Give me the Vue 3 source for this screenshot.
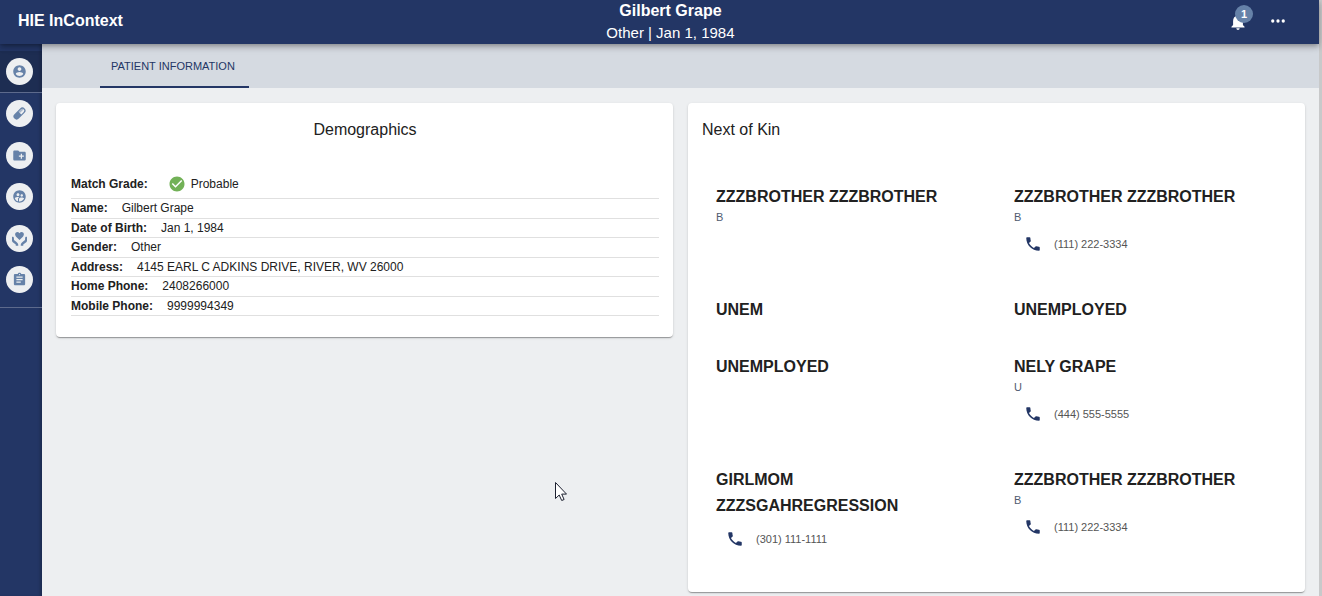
<script setup>
const navItems = [
  { label: 'Medications', icon: 'pill' },
  { label: 'Documents', icon: 'folder' },
  { label: 'Care team', icon: 'group' },
  { label: 'Care plans', icon: 'care' },
  { label: 'Assessments', icon: 'clipboard' },
]

const demographics = [
  { label: 'Match Grade:', value: 'Probable', match: true },
  { label: 'Name:', value: 'Gilbert Grape' },
  { label: 'Date of Birth:', value: 'Jan 1, 1984' },
  { label: 'Gender:', value: 'Other' },
  { label: 'Address:', value: '4145 EARL C ADKINS DRIVE, RIVER, WV 26000' },
  { label: 'Home Phone:', value: '2408266000' },
  { label: 'Mobile Phone:', value: '9999994349' },
]

const kin = [
  { name: 'ZZZBROTHER ZZZBROTHER', code: 'B' },
  { name: 'ZZZBROTHER ZZZBROTHER', code: 'B', phone: '(111) 222-3334' },
  { name: 'UNEM' },
  { name: 'UNEMPLOYED' },
  { name: 'UNEMPLOYED' },
  { name: 'NELY GRAPE', code: 'U', phone: '(444) 555-5555' },
  { name: 'GIRLMOM ZZZSGAHREGRESSION', phone: '(301) 111-1111' },
  { name: 'ZZZBROTHER ZZZBROTHER', code: 'B', phone: '(111) 222-3334' },
]
</script>

<template>
  <div class="app">
    <header class="topbar">
      <div class="brand">HIE InContext</div>
      <div class="patient">
        <h1>Gilbert Grape</h1>
        <p>Other | Jan 1, 1984</p>
      </div>
      <div class="actions">
        <button class="action" type="button" aria-label="Notifications">
          <svg width="20" height="18" viewBox="0 0 24 22"><path d="M12 22c1.100 0 2-.9 2-2h-4c0 1.100.9 2 2 2zm6-6v-5c0-3.070-1.640-5.640-4.500-6.320V4c0-.83-.67-1.500-1.500-1.500s-1.500.67-1.500 1.500v.68C7.630 5.360 6 7.920 6 11v5l-2 2v1h16v-1l-2-2z" /></svg>
          <span class="badge">1</span>
        </button>
        <button class="action" type="button" aria-label="More">
          <svg width="18" height="18" viewBox="0 0 24 24"><circle cx="5" cy="12" r="2.200" /><circle cx="12" cy="12" r="2.200" /><circle cx="19" cy="12" r="2.200" /></svg>
        </button>
      </div>
    </header>

    <div class="body">
      <nav class="sidebar">
        <div class="current">
          <button class="nav-btn" type="button" aria-label="Patient">
            <svg width="15" height="15" viewBox="0 0 24 24"><path d="M12 2C6.480 2 2 6.480 2 12s4.480 10 10 10 10-4.480 10-10S17.520 2 12 2zm0 3c1.660 0 3 1.340 3 3s-1.340 3-3 3-3-1.340-3-3 1.340-3 3-3zm0 14.200c-2.500 0-4.710-1.280-6-3.220.03-1.990 4-3.080 6-3.080 1.990 0 5.970 1.090 6 3.080-1.290 1.940-3.500 3.220-6 3.220z" /></svg>
          </button>
        </div>
        <div class="links">
          <button v-for="n in navItems" :key="n.icon" class="nav-btn" type="button" :aria-label="n.label">
            <svg v-if="n.icon === 'pill'" width="15" height="15" viewBox="0 0 24 24">
              <g transform="rotate(45 12 12)">
                <rect x="7" y="0.500" width="10" height="23" rx="5" />
                <path class="cut" d="M9 11V5.500a3 3 0 0 1 6 0V11z" />
                <path d="M9 5.500a3 3 0 0 1 3-3V11H9z" opacity="0.500" />
              </g>
            </svg>
            <svg v-else-if="n.icon === 'folder'" width="15" height="15" viewBox="0 0 24 24"><path d="M20 6h-8l-2-2H4c-1.110 0-1.990.89-1.990 2L2 18c0 1.110.89 2 2 2h16c1.110 0 2-.89 2-2V8c0-1.110-.89-2-2-2zm-1 8h-3v3h-2v-3h-3v-2h3V9h2v3h3v2z" /></svg>
            <svg v-else-if="n.icon === 'group'" width="15" height="15" viewBox="0 0 24 24"><path d="M11.990 2c-5.520 0-10 4.480-10 10s4.480 10 10 10 10-4.480 10-10-4.480-10-10-10zm3.610 6.340c1.070 0 1.930.86 1.930 1.930 0 1.070-.86 1.930-1.930 1.930-1.070 0-1.930-.86-1.930-1.930-.01-1.070.86-1.930 1.930-1.930zm-6-1.580c1.300 0 2.360 1.060 2.360 2.360 0 1.300-1.060 2.360-2.360 2.360s-2.360-1.060-2.360-2.360c0-1.310 1.050-2.360 2.360-2.360zm0 9.130v3.750c-2.400-.75-4.300-2.600-5.140-4.960 1.050-1.120 3.670-1.690 5.140-1.690.53 0 1.200.08 1.900.22-1.640.87-1.900 2.020-1.900 2.680zM11.990 20c-.27 0-.53-.01-.79-.04v-4.070c0-1.420 2.940-2.130 4.400-2.130 1.070 0 2.920.39 3.840 1.150-1.170 2.970-4.060 5.090-7.450 5.090z" /></svg>
            <svg v-else-if="n.icon === 'care'" width="15" height="15" viewBox="0 0 24 24">
              <path d="M12 14.500L6.200 8.600C4.500 6.700 4.600 4 6.300 2.500 8 1 10.600 1.400 12 3.500c1.400-2.100 4-2.500 5.700-1 1.700 1.500 1.800 4.200.1 6.100z" />
              <path d="M0 9.500c1.600-.6 2.900.2 3 1.700l.2 3.300 3.500 2.700c1.900 1.500 3.300 3 3.300 5V23.500H6V21.500L1.200 18C.4 17.400 0 16.600 0 15.600zM24 9.500c-1.600-.6-2.900.2-3 1.700l-.2 3.300-3.500 2.700c-1.900 1.500-3.300 3-3.300 5V23.500h4V21.500l4.800-3.500c.8-.6 1.200-1.400 1.200-2.400z" />
            </svg>
            <svg v-else width="15" height="15" viewBox="0 0 24 24"><path d="M19 3h-4.180C14.400 1.840 13.300 1 12 1c-1.300 0-2.400.84-2.820 2H5c-1.100 0-2 .9-2 2v14c0 1.100.9 2 2 2h14c1.100 0 2-.9 2-2V5c0-1.100-.9-2-2-2zm-7 0c.55 0 1 .45 1 1s-.45 1-1 1-1-.45-1-1 .45-1 1-1zm2 14H7v-2h7v2zm3-4H7v-2h10v2zm0-4H7V7h10v2z" /></svg>
          </button>
        </div>
      </nav>

      <main class="content">
        <div class="tabs" role="tablist">
          <button class="tab" type="button" role="tab" aria-selected="true">PATIENT INFORMATION</button>
        </div>
        <div class="cards">
          <section class="card demo">
            <h2>Demographics</h2>
            <dl>
              <div v-for="d in demographics" :key="d.label" class="row" :class="{ match: d.match }">
                <dt>{{ d.label }}</dt>
                <dd>
                  <svg v-if="d.match" width="18" height="18" viewBox="0 0 24 24"><path d="M12 2C6.480 2 2 6.480 2 12s4.480 10 10 10 10-4.480 10-10S17.520 2 12 2zm-2 15l-5-5 1.410-1.410L10 14.170l7.590-7.590L19 8l-9 9z" /></svg>
                  {{ d.value }}
                </dd>
              </div>
            </dl>
          </section>

          <section class="card kin">
            <h2>Next of Kin</h2>
            <ul>
              <li v-for="(k, i) in kin" :key="i">
                <h3>{{ k.name }}</h3>
                <p v-if="k.code" class="code">{{ k.code }}</p>
                <p v-if="k.phone" class="phone">
                  <svg width="18" height="18" viewBox="0 0 24 24"><path d="M6.620 10.790c1.440 2.830 3.760 5.140 6.590 6.590l2.200-2.200c.27-.27.67-.36 1.020-.24 1.120.37 2.330.57 3.570.57.55 0 1 .45 1 1V20c0 .55-.45 1-1 1-9.390 0-17-7.610-17-17 0-.55.45-1 1-1h3.500c.55 0 1 .45 1 1 0 1.250.2 2.450.57 3.570.11.35.03.74-.25 1.020l-2.200 2.200z" /></svg>
                  <span>{{ k.phone }}</span>
                </p>
              </li>
            </ul>
          </section>
        </div>
      </main>
    </div>

    <svg class="pointer" width="12" height="19" viewBox="0 0 12 19" aria-hidden="true"><path d="M.5.5v16l3.700-3.500 2.500 5.500 2.400-1-2.400-5.400h4.800z" /></svg>
  </div>
</template>

<style>
body {
  margin: 0;
  background: #edeff1;
}
</style>

<style scoped>
.app {
  box-sizing: border-box;
  display: flex;
  flex-direction: column;
  min-height: 100vh;
  border-right: 3px solid #c8c9ca;
  background: #edeff1;
  color: #212121;
  font-family: "Liberation Sans", Arial, sans-serif;
  font-size: 12px;
}
h1, h2, h3, p, ul, dl, dd {
  margin: 0;
  padding: 0;
}
button {
  border: 0;
  padding: 0;
  font: inherit;
  cursor: pointer;
}
svg {
  display: block;
  flex: none;
}

.topbar {
  position: relative;
  z-index: 2;
  display: flex;
  align-items: center;
  height: 44px;
  padding: 0 21px 0 18px;
  background: #233665;
  color: #fff;
  box-shadow: 0 2px 4px -1px rgba(0, 0, 0, 0.2), 0 4px 5px rgba(0, 0, 0, 0.14), 0 1px 10px rgba(0, 0, 0, 0.12);
}
.brand {
  padding-bottom: 2px;
  font-size: 16px;
  font-weight: 700;
}
.patient {
  flex: 1;
  text-align: center;
}
.patient h1 {
  font-size: 16px;
  line-height: 22px;
}
.patient p {
  font-size: 15px;
  line-height: 22px;
}
.actions {
  display: flex;
  padding-bottom: 2px;
}
.action {
  position: relative;
  display: flex;
  align-items: center;
  justify-content: center;
  width: 40px;
  height: 40px;
  background: none;
  color: #fff;
}
.action svg {
  fill: #fff;
}
.badge {
  position: absolute;
  top: 4px;
  right: 5px;
  width: 18px;
  height: 18px;
  border-radius: 9px;
  background: #6682a8;
  font-size: 11px;
  font-weight: 700;
  line-height: 18px;
  text-align: center;
}

.body {
  display: flex;
  flex: 1;
}
.sidebar {
  flex: none;
  width: 42px;
  padding-top: 7px;
  box-sizing: border-box;
  background: #233665;
  box-shadow: inset -3px 0 3px -1px rgba(0, 0, 0, 0.2);
}
.current {
  display: flex;
  height: 41px;
  padding-left: 6px;
  align-items: center;
  border-bottom: 1px solid #5d6a8c;
  background: rgba(20, 30, 50, 0.35);
}
.links {
  display: flex;
  flex-direction: column;
  justify-content: space-between;
  height: 193px;
  padding: 7px 0 14px 6px;
  border-bottom: 1px solid #5d6a8c;
}
.nav-btn {
  display: flex;
  align-items: center;
  justify-content: center;
  width: 27px;
  height: 27px;
  border-radius: 50%;
  background: #edeff1;
}
.nav-btn svg {
  fill: #6682a8;
}
.nav-btn .cut {
  fill: #edeff1;
}

.content {
  flex: 1;
  min-width: 0;
}
.tabs {
  display: flex;
  height: 44px;
  padding-left: 58px;
  background: #d5dae1;
}
.tab {
  padding: 2px 14px 0 11px;
  border-bottom: 2px solid #233665;
  background: none;
  color: #233665;
  font-size: 11px;
}
.cards {
  display: grid;
  grid-template-columns: 1fr 1fr;
  align-items: start;
  gap: 15px;
  padding: 15px 14px 0;
}
.card {
  padding: 15px 14px 0;
  border-radius: 4px;
  background: #fff;
  box-shadow: 0 2px 1px -1px rgba(0, 0, 0, 0.2), 0 1px 1px rgba(0, 0, 0, 0.14), 0 1px 3px rgba(0, 0, 0, 0.12);
}
.card h2 {
  font-size: 16px;
  font-weight: 400;
  line-height: 24px;
}

.demo {
  padding-left: 15px;
  padding-bottom: 21px;
}
.demo h2 {
  text-align: center;
}
.demo dl {
  display: grid;
  grid-template-rows: 24px repeat(6, 1fr);
  height: 141px;
  margin-top: 33px;
}
.row {
  display: flex;
  align-items: center;
  gap: 14px;
  border-bottom: 1px solid #e0e0e0;
}
.row dt {
  font-weight: 700;
}
.row dd {
  display: flex;
  align-items: center;
  gap: 5px;
}
.match {
  gap: 20px;
  padding-bottom: 6px;
}
.match svg {
  fill: #72b157;
}

.kin {
  padding-bottom: 31px;
}
.kin ul {
  display: grid;
  grid-template-columns: 1fr 1fr;
  row-gap: 31px;
  margin: 42px -7px 0 0;
  list-style: none;
}
.kin li {
  padding: 0 28px 0 14px;
}
.kin h3 {
  font-size: 16px;
  line-height: 26px;
}
.code {
  color: #4f5b70;
  font-size: 11px;
  line-height: 14px;
}
.phone {
  display: flex;
  align-items: center;
  gap: 12px;
  height: 40px;
  margin-bottom: 2px;
  padding-left: 10px;
  color: #555;
  font-size: 11px;
}
.phone svg {
  fill: #233665;
}

.pointer {
  position: absolute;
  left: 555px;
  top: 482px;
  fill: #fff;
  stroke: #1c2030;
}
</style>
